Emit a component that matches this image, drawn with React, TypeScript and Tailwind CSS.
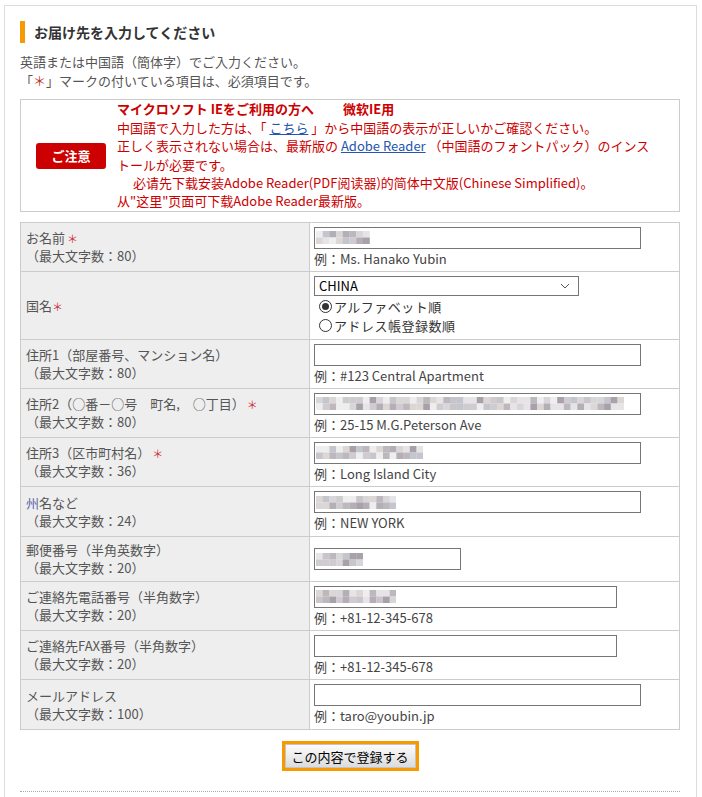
import React from "react";

function Req({ space = true }: { space?: boolean }) {
  return <span className={`text-[11px] text-[#d0303a] ${space ? "ml-[2px]" : "ml-0"}`}>＊</span>;
}

function Mosaic({ w, seed }: { w: number; seed: number }) {
  const cw = 6.7;
  const cols = Math.floor(w / cw);
  let s = seed;
  const rnd = () => {
    s = (s * 9301 + 49297) % 233280;
    return s / 233280;
  };
  const palette = [
    "#c9c5ca",
    "#d8d6d9",
    "#b4aeb6",
    "#e6e4e6",
    "#a8a1aa",
    "#cfcbd0",
    "#efeeef",
    "#bdb8be",
    "#dcd6d4",
    "#c3c6cc",
  ];
  const rects: React.ReactNode[] = [];
  for (let r = 0; r < 2; r++) {
    for (let c = 0; c < cols; c++) {
      const col = palette[Math.floor(rnd() * palette.length)];
      rects.push(
        <rect key={`${r}-${c}`} x={c * cw} y={r * 6.5} width={cw + 0.2} height={6.6} fill={col} />
      );
    }
  }
  return (
    <svg width={cols * cw} height={13} className="block">
      {rects}
    </svg>
  );
}

function Field({ wCls, mosaic, seed = 7 }: { wCls: string; mosaic?: number; seed?: number }) {
  return (
    <div className={`${wCls} h-[22px] border border-[#767676] bg-white flex items-center pl-[1px] shrink-0`}>
      {mosaic ? <Mosaic w={mosaic} seed={seed} /> : null}
    </div>
  );
}

function Example({ children }: { children: React.ReactNode }) {
  return <div className="text-[13px] leading-[19px] text-[#444] whitespace-nowrap">{children}</div>;
}

function Row({
  hCls,
  label,
  sub,
  children,
}: {
  hCls: string;
  label: React.ReactNode;
  sub?: string;
  children: React.ReactNode;
}) {
  return (
    <div className={`flex border-b border-[#ccc] ${hCls}`}>
      <div className="w-[289px] shrink-0 border-r border-[#ccc] bg-[#eeeeee] pl-[5px] flex flex-col justify-center text-[13px] leading-[18px] text-[#555]">
        <div className="whitespace-nowrap">{label}</div>
        {sub ? <div className="whitespace-nowrap">{sub}</div> : null}
      </div>
      <div className="w-[370px] shrink-0 pl-[4px] flex flex-col justify-center">{children}</div>
    </div>
  );
}

function Radio({ checked, label }: { checked?: boolean; label: string }) {
  return (
    <div className="flex items-center h-[19px] text-[13px] text-[#333] whitespace-nowrap">
      <span className="ml-[5px] w-[13px] h-[13px] rounded-full border border-[#333] bg-white flex items-center justify-center shrink-0">
        {checked ? <span className="w-[7px] h-[7px] rounded-full bg-[#333]" /> : null}
      </span>
      <span className="ml-[2px] tracking-[0.5px]">{label}</span>
    </div>
  );
}

export default function App() {
  return (
    <div className="min-h-[797px] bg-white pt-[5px] pl-[4px] pr-[5px] font-['Noto_Sans_CJK_JP',sans-serif]">
      <div className="border-t border-l border-r border-[#dddddd] pl-[15px] pt-[15px] pb-[40px]">
        {/* heading */}
        <div className="h-[22px] border-l-[5px] border-[#f59a00] pl-[9px] flex items-center text-[14px] font-bold text-[#333]">
          お届け先を入力してください
        </div>

        {/* intro */}
        <div className="mt-[9px] text-[13px] leading-[19px] text-[#555]">
          <div>英語または中国語（簡体字）でご入力ください。</div>
          <div>
            「<span className="text-[#c0392b]">＊</span>」マークの付いている項目は、必須項目です。
          </div>
        </div>

        {/* notice */}
        <div className="mt-[9px] w-[660px] h-[113px] border border-[#cccccc] flex items-center">
          <div className="ml-[15px] w-[70px] h-[26px] rounded-[3px] bg-[#cc0000] text-white text-[13px] font-bold flex items-center justify-center shrink-0">
            ご注意
          </div>
          <div className="ml-[11px] text-[13px] leading-[18.4px] text-[#cc0000] whitespace-nowrap">
            <div className="font-bold">
              マイクロソフト IEをご利用の方へ<span className="ml-[29px]">微软IE用</span>
            </div>
            <div>
              中国語で入力した方は、「 <span className="text-[#2456b0] underline">こちら</span> 」から中国語の表示が正しいかご確認ください。
            </div>
            <div>
              正しく表示されない場合は、最新版の <span className="text-[#2456b0] underline">Adobe Reader</span> （中国語のフォントパック）のインス
            </div>
            <div>トールが必要です。</div>
            <div className="pl-[16px]">必请先下载安装Adobe Reader(PDF阅读器)的简体中文版(Chinese Simplified)。</div>
            <div>从&quot;这里&quot;页面可下载Adobe Reader最新版。</div>
          </div>
        </div>

        {/* table */}
        <div className="mt-[10px] w-[660px] border-t border-l border-r border-[#ccc]">
          <Row
            hCls="h-[49px]"
            label={
              <>
                お名前
                <Req />
              </>
            }
            sub="（最大文字数：80）"
          >
            <Field wCls="w-[327px]" mosaic={58} seed={11} />
            <Example>例：Ms. Hanako Yubin</Example>
          </Row>

          <Row
            hCls="h-[68px]"
            label={
              <>
                国名
                <Req space={false} />
              </>
            }
          >
            <div className="relative w-[265px] h-[20px] border border-[#767676] bg-white flex items-center pl-[4px] text-[13px] text-black">
              CHINA
              <svg className="absolute right-[8px] top-[6px]" width="10" height="6" viewBox="0 0 10 6">
                <path d="M1 1 L5 5 L9 1" fill="none" stroke="#555" strokeWidth="1" />
              </svg>
            </div>
            <div className="mt-[1px]">
              <Radio checked label="アルファベット順" />
              <Radio label="アドレス帳登録数順" />
            </div>
          </Row>

          <Row hCls="h-[49px]" label="住所1（部屋番号、マンション名）" sub="（最大文字数：80）">
            <Field wCls="w-[327px]" />
            <Example>例：#123 Central Apartment</Example>
          </Row>

          <Row
            hCls="h-[49px]"
            label={
              <>
                住所2（○番－○号　町名,　○丁目）
                <Req />
              </>
            }
            sub="（最大文字数：80）"
          >
            <Field wCls="w-[327px]" mosaic={314} seed={23} />
            <Example>例：25-15 M.G.Peterson Ave</Example>
          </Row>

          <Row
            hCls="h-[49px]"
            label={
              <>
                住所3（区市町村名）
                <Req />
              </>
            }
            sub="（最大文字数：36）"
          >
            <Field wCls="w-[327px]" mosaic={112} seed={37} />
            <Example>例：Long Island City</Example>
          </Row>

          <Row
            hCls="h-[50px]"
            label={
              <>
                <span className="text-[#5a64a8]">州</span>名など
              </>
            }
            sub="（最大文字数：24）"
          >
            <Field wCls="w-[327px]" mosaic={84} seed={41} />
            <Example>例：NEW YORK</Example>
          </Row>

          <Row hCls="h-[45px]" label="郵便番号（半角英数字）" sub="（最大文字数：20）">
            <Field wCls="w-[147px]" mosaic={49} seed={53} />
          </Row>

          <Row hCls="h-[49px]" label="ご連絡先電話番号（半角数字）" sub="（最大文字数：20）">
            <Field wCls="w-[303px]" mosaic={82} seed={67} />
            <Example>例：+81-12-345-678</Example>
          </Row>

          <Row hCls="h-[49px]" label="ご連絡先FAX番号（半角数字）" sub="（最大文字数：20）">
            <Field wCls="w-[303px]" />
            <Example>例：+81-12-345-678</Example>
          </Row>

          <Row hCls="h-[50px]" label="メールアドレス" sub="（最大文字数：100）">
            <Field wCls="w-[327px]" />
            <Example>例：taro@youbin.jp</Example>
          </Row>
        </div>

        {/* button */}
        <div className="w-[660px] mt-[11px] flex justify-center">
          <div className="w-[137px] h-[30px] border-[3px] border-[#f59a00] flex">
            <button className="flex-1 border border-[#c4c4c4] bg-linear-to-b from-[#fcfcfc] to-[#dcdcdc] text-[13px] text-black flex items-center justify-center leading-none">
              この内容で登録する
            </button>
          </div>
        </div>

        {/* dotted line */}
        <div className="w-[660px] mt-[20px] border-t border-dotted border-[#aaaaaa]" />
      </div>
    </div>
  );
}
